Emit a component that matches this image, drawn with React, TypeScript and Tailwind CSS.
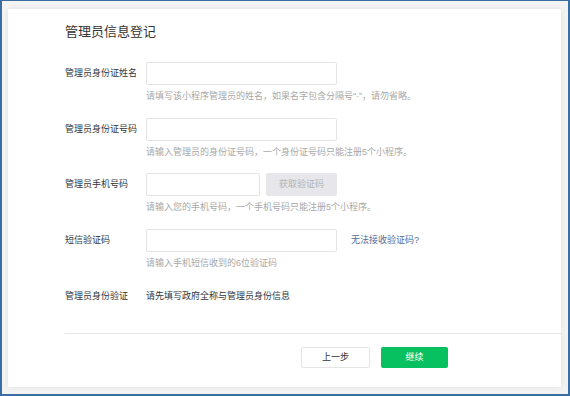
import React from "react";

const font = { fontFamily: '"Liberation Sans", "Noto Sans CJK SC", sans-serif' };

function Row({
  label,
  children,
  hint,
  className = "",
}: {
  label: string;
  children: React.ReactNode;
  hint?: string;
  className?: string;
}) {
  return (
    <div className={"flex " + className}>
      <div className="w-[81px] h-[23px] flex items-center text-[9px] text-[#353535]">{label}</div>
      <div className="flex flex-col">
        <div className="flex items-center">{children}</div>
        {hint && <div className="mt-[5px] text-[9px] leading-[12px] text-[#a8a8a8]">{hint}</div>}
      </div>
    </div>
  );
}

export default function App() {
  return (
    <div
      style={font}
      className="w-[570px] h-[396px] bg-[#f3f3f3] border-t border-l-2 border-r-2 border-b-2 border-[#3a6ea3] overflow-hidden"
    >
      <div className="ml-[6px] mt-[8px] w-[553px] h-[378px] bg-white shadow-[0_0_6px_rgba(0,0,0,0.08)] flex flex-col">
        <div className="pl-[57px] pt-[15px]">
          <div className="text-[13px] leading-[16px] text-[#353535]">管理员信息登记</div>
          <Row label="管理员身份证姓名" hint="请填写该小程序管理员的姓名，如果名字包含分隔号“·”，请勿省略。" className="mt-[22px]">
            <div className="w-[191px] h-[23px] border border-[#e4e4e4] rounded-[2px]" />
          </Row>
          <Row label="管理员身份证号码" hint="请输入管理员的身份证号码，一个身份证号码只能注册5个小程序。" className="mt-[16px]">
            <div className="w-[191px] h-[23px] border border-[#e4e4e4] rounded-[2px]" />
          </Row>
          <Row label="管理员手机号码" hint="请输入您的手机号码，一个手机号码只能注册5个小程序。" className="mt-[15px]">
            <div className="w-[114px] h-[23px] border border-[#e4e4e4] rounded-[2px]" />
            <div className="ml-[6px] w-[71px] h-[23px] bg-[#e7e7eb] rounded-[2px] flex items-center justify-center text-[9px] text-[#b3b3b3]">
              获取验证码
            </div>
          </Row>
          <Row label="短信验证码" hint="请输入手机短信收到的6位验证码" className="mt-[16px]">
            <div className="w-[191px] h-[23px] border border-[#e4e4e4] rounded-[2px]" />
            <div className="ml-[14px] text-[9px] text-[#576b95]">无法接收验证码?</div>
          </Row>
          <div className="flex mt-[21px] text-[9px] leading-[12px]">
            <div className="w-[81px] text-[#353535]">管理员身份验证</div>
            <div className="text-[#353535]">请先填写政府全称与管理员身份信息</div>
          </div>
          <div className="mt-[31px] h-px bg-[#e7e7eb]" />
          <div className="flex mt-[13px] pl-[236px] gap-[11px]">
            <div className="w-[69px] h-[21px] border border-[#e4e4e4] rounded-[2px] flex items-center justify-center text-[9px] text-[#353535]">
              上一步
            </div>
            <div className="w-[67px] h-[21px] bg-[#07c160] rounded-[2px] flex items-center justify-center text-[9px] text-white">
              继续
            </div>
          </div>
        </div>
      </div>
    </div>
  );
}
